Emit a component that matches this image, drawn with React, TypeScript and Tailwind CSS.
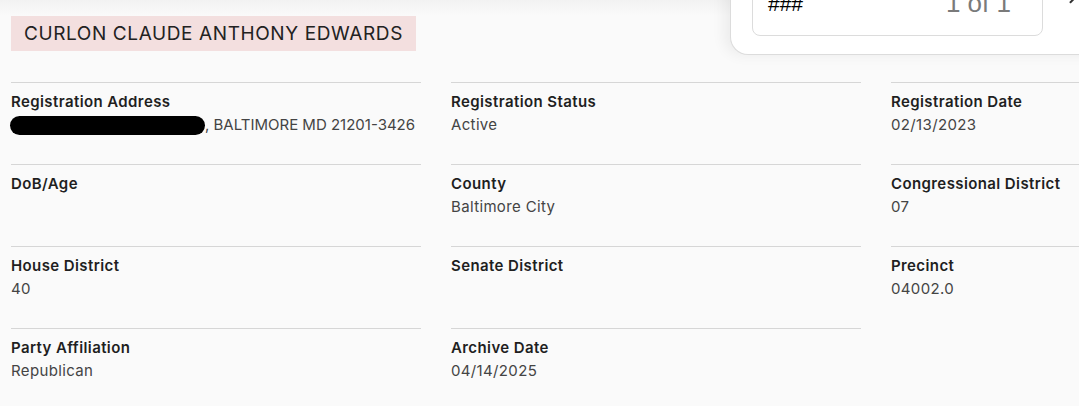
import { ChevronUp } from "lucide-react";

const ROWS: { label: string; value?: string; redacted?: boolean }[][] = [
  [
    { label: "Registration Address", value: ", BALTIMORE MD 21201-3426", redacted: true },
    { label: "Registration Status", value: "Active" },
    { label: "Registration Date", value: "02/13/2023" },
  ],
  [
    { label: "DoB/Age" },
    { label: "County", value: "Baltimore City" },
    { label: "Congressional District", value: "07" },
  ],
  [
    { label: "House District", value: "40" },
    { label: "Senate District" },
    { label: "Precinct", value: "04002.0" },
  ],
  [
    { label: "Party Affiliation", value: "Republican" },
    { label: "Archive Date", value: "04/14/2025" },
  ],
];

function Field({ label, value, redacted }: { label: string; value?: string; redacted?: boolean }) {
  return (
    <div className="h-[82px] border-t border-[#d6d6d6] pt-[9px]">
      <div className="text-[15px] font-semibold leading-5 tracking-[0.4px] text-[#1f1f1f]">{label}</div>
      {redacted ? (
        <div className="mt-[3px] flex items-center whitespace-nowrap text-[15px] leading-5 text-[#444]">
          <span className="-ml-px h-[19px] w-[195px] rounded-full bg-black" />
          {value}
        </div>
      ) : (
        <div className="mt-[3px] whitespace-nowrap text-[15px] leading-5 tracking-[0.35px] text-[#444]">
          {value}
        </div>
      )}
    </div>
  );
}

export default function App() {
  return (
    <div
      className="relative h-[406px] w-full overflow-hidden bg-[#fafafa]"
      style={{ fontFamily: "Inter, 'Noto Sans', sans-serif" }}
    >
      <div className="h-[16px] bg-gradient-to-b from-[#f2f2f2] to-[#fafafa]" />

      <div className="px-[11px]">
        <div className="inline-block bg-[#f3dfdf] px-[13px] py-[6px] text-[19px] leading-[23px] tracking-[0.6px] text-[#222]">
          CURLON CLAUDE ANTHONY EDWARDS
        </div>

        <div className="mt-[31px] grid w-[1310px] grid-cols-[410px_410px_410px] gap-x-[30px]">
          {ROWS.map((row) =>
            row.map((f) => <Field key={f.label} {...f} />)
          )}
        </div>
      </div>

      <div className="absolute left-[730px] top-[-30px] h-[85px] w-[380px] rounded-bl-[18px] border-b border-l border-[#dcdcdc] bg-white shadow-[-6px_0_14px_rgba(0,0,0,0.06)]">
        <div
          className="absolute left-[21px] top-[10px] flex h-[56px] w-[291px] items-end justify-between rounded-[8px] border border-[#dcdcdc] px-[15px] pb-[18px]"
          style={{ fontFamily: "'Liberation Sans', Arial, sans-serif" }}
        >
          <span className="mb-[1px] text-[21px] leading-[24px] text-black">###</span>
          <span className="mr-[16px] text-[26px] leading-[28px] text-[#7a7a7a]">1 of 1</span>
        </div>
        <ChevronUp className="absolute left-[333px] top-[16px] h-[26px] w-[26px] text-[#333]" strokeWidth={1.8} />
      </div>
    </div>
  );
}
